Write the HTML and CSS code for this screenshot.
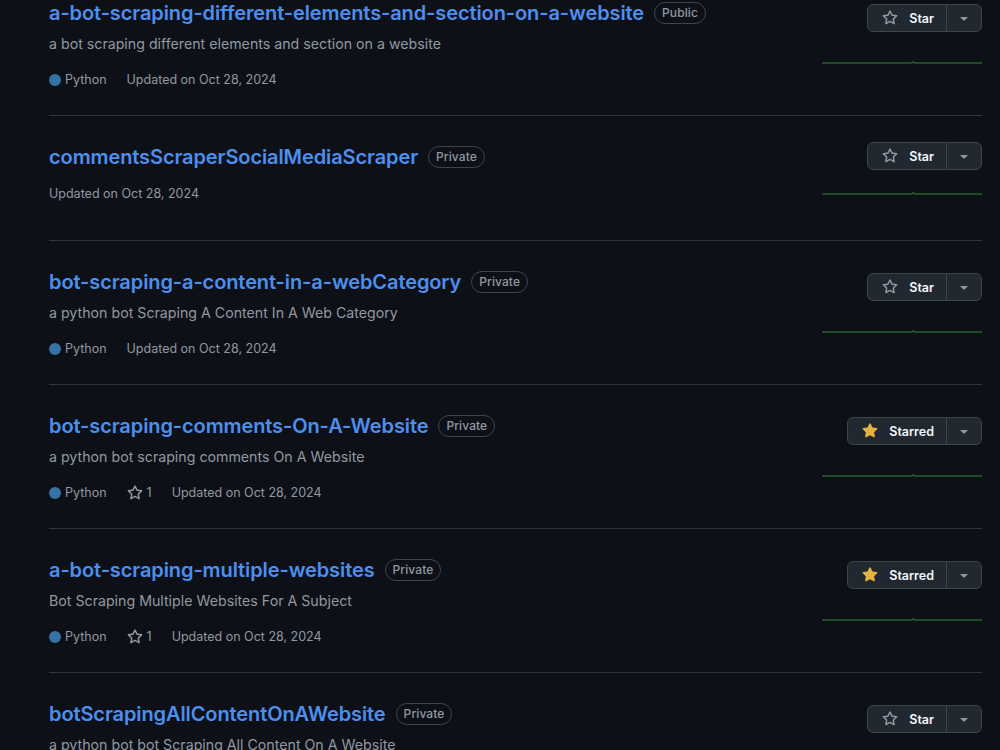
FILE: index.html
```html
<!DOCTYPE html>
<html lang="en">
<head>
<meta charset="utf-8">
<title>Repositories</title>
<link rel="stylesheet" href="styles.css">
</head>
<body>
<ul class="repo-list">
  <li class="repo">
    <div class="repo-main">
      <h3 class="repo-title"><a class="repo-link" href="#">a-bot-scraping-different-elements-and-section-on-a-website</a><span class="badge">Public</span></h3>
      <p class="repo-desc">a bot scraping different elements and section on a website</p>
      <div class="repo-meta"><span class="lang"><span class="lang-dot"></span>Python</span><span>Updated on Oct 28, 2024</span></div>
    </div>
    <div class="repo-side">
      <div class="star-group"><button class="star-btn"><svg class="star-icon" viewBox="0 0 16 16" width="16" height="16"><path d="M8 .25a.75.75 0 0 1 .673.418l1.882 3.815 4.21.612a.75.75 0 0 1 .416 1.279l-3.046 2.97.719 4.192a.751.751 0 0 1-1.088.791L8 12.347l-3.766 1.98a.75.75 0 0 1-1.088-.79l.72-4.194L.818 6.374a.75.75 0 0 1 .416-1.28l4.21-.611L7.327.668A.75.75 0 0 1 8 .25Zm0 2.445L6.615 5.5a.75.75 0 0 1-.564.41l-3.097.45 2.24 2.184a.75.75 0 0 1 .216.664l-.528 3.084 2.769-1.456a.75.75 0 0 1 .698 0l2.77 1.456-.53-3.084a.75.75 0 0 1 .216-.664l2.24-2.183-3.096-.45a.75.75 0 0 1-.564-.41L8 2.694Z"/></svg>Star</button><button class="star-drop"><svg viewBox="0 0 16 16" width="16" height="16"><path d="m4.427 7.427 3.396 3.396a.25.25 0 0 0 .354 0l3.396-3.396A.25.25 0 0 0 11.396 7H4.604a.25.25 0 0 0-.177.427Z"/></svg></button></div>
      <div class="spark"><svg viewBox="0 0 160 30" width="160" height="30"><polyline points="0,24 89,24 91,23 93,24 160,24"/></svg></div>
    </div>
  </li>
  <li class="repo">
    <div class="repo-main">
      <h3 class="repo-title"><a class="repo-link" href="#">commentsScraperSocialMediaScraper</a><span class="badge">Private</span></h3>
      <div class="repo-meta solo"><span>Updated on Oct 28, 2024</span></div>
    </div>
    <div class="repo-side">
      <div class="star-group"><button class="star-btn"><svg class="star-icon" viewBox="0 0 16 16" width="16" height="16"><path d="M8 .25a.75.75 0 0 1 .673.418l1.882 3.815 4.21.612a.75.75 0 0 1 .416 1.279l-3.046 2.97.719 4.192a.751.751 0 0 1-1.088.791L8 12.347l-3.766 1.98a.75.75 0 0 1-1.088-.79l.72-4.194L.818 6.374a.75.75 0 0 1 .416-1.28l4.21-.611L7.327.668A.75.75 0 0 1 8 .25Zm0 2.445L6.615 5.5a.75.75 0 0 1-.564.41l-3.097.45 2.24 2.184a.75.75 0 0 1 .216.664l-.528 3.084 2.769-1.456a.75.75 0 0 1 .698 0l2.77 1.456-.53-3.084a.75.75 0 0 1 .216-.664l2.24-2.183-3.096-.45a.75.75 0 0 1-.564-.41L8 2.694Z"/></svg>Star</button><button class="star-drop"><svg viewBox="0 0 16 16" width="16" height="16"><path d="m4.427 7.427 3.396 3.396a.25.25 0 0 0 .354 0l3.396-3.396A.25.25 0 0 0 11.396 7H4.604a.25.25 0 0 0-.177.427Z"/></svg></button></div>
      <div class="spark"><svg viewBox="0 0 160 30" width="160" height="30"><polyline points="0,24 89,24 91,23 93,24 160,24"/></svg></div>
    </div>
  </li>
  <li class="repo">
    <div class="repo-main">
      <h3 class="repo-title"><a class="repo-link" href="#">bot-scraping-a-content-in-a-webCategory</a><span class="badge">Private</span></h3>
      <p class="repo-desc">a python bot Scraping A Content In A Web Category</p>
      <div class="repo-meta"><span class="lang"><span class="lang-dot"></span>Python</span><span>Updated on Oct 28, 2024</span></div>
    </div>
    <div class="repo-side">
      <div class="star-group"><button class="star-btn"><svg class="star-icon" viewBox="0 0 16 16" width="16" height="16"><path d="M8 .25a.75.75 0 0 1 .673.418l1.882 3.815 4.21.612a.75.75 0 0 1 .416 1.279l-3.046 2.97.719 4.192a.751.751 0 0 1-1.088.791L8 12.347l-3.766 1.98a.75.75 0 0 1-1.088-.79l.72-4.194L.818 6.374a.75.75 0 0 1 .416-1.28l4.21-.611L7.327.668A.75.75 0 0 1 8 .25Zm0 2.445L6.615 5.5a.75.75 0 0 1-.564.41l-3.097.45 2.24 2.184a.75.75 0 0 1 .216.664l-.528 3.084 2.769-1.456a.75.75 0 0 1 .698 0l2.77 1.456-.53-3.084a.75.75 0 0 1 .216-.664l2.24-2.183-3.096-.45a.75.75 0 0 1-.564-.41L8 2.694Z"/></svg>Star</button><button class="star-drop"><svg viewBox="0 0 16 16" width="16" height="16"><path d="m4.427 7.427 3.396 3.396a.25.25 0 0 0 .354 0l3.396-3.396A.25.25 0 0 0 11.396 7H4.604a.25.25 0 0 0-.177.427Z"/></svg></button></div>
      <div class="spark"><svg viewBox="0 0 160 30" width="160" height="30"><polyline points="0,24 89,24 91,23 93,24 160,24"/></svg></div>
    </div>
  </li>
  <li class="repo">
    <div class="repo-main">
      <h3 class="repo-title"><a class="repo-link" href="#">bot-scraping-comments-On-A-Website</a><span class="badge">Private</span></h3>
      <p class="repo-desc">a python bot scraping comments On A Website</p>
      <div class="repo-meta"><span class="lang"><span class="lang-dot"></span>Python</span><span class="stars"><svg class="star-icon" viewBox="0 0 16 16" width="16" height="16"><path d="M8 .25a.75.75 0 0 1 .673.418l1.882 3.815 4.21.612a.75.75 0 0 1 .416 1.279l-3.046 2.97.719 4.192a.751.751 0 0 1-1.088.791L8 12.347l-3.766 1.98a.75.75 0 0 1-1.088-.79l.72-4.194L.818 6.374a.75.75 0 0 1 .416-1.28l4.21-.611L7.327.668A.75.75 0 0 1 8 .25Zm0 2.445L6.615 5.5a.75.75 0 0 1-.564.41l-3.097.45 2.24 2.184a.75.75 0 0 1 .216.664l-.528 3.084 2.769-1.456a.75.75 0 0 1 .698 0l2.77 1.456-.53-3.084a.75.75 0 0 1 .216-.664l2.24-2.183-3.096-.45a.75.75 0 0 1-.564-.41L8 2.694Z"/></svg>1</span><span>Updated on Oct 28, 2024</span></div>
    </div>
    <div class="repo-side">
      <div class="star-group"><button class="star-btn"><svg class="star-icon filled" viewBox="0 0 16 16" width="16" height="16"><path d="M8 .25a.75.75 0 0 1 .673.418l1.882 3.815 4.21.612a.75.75 0 0 1 .416 1.279l-3.046 2.97.719 4.192a.751.751 0 0 1-1.088.791L8 12.347l-3.766 1.98a.75.75 0 0 1-1.088-.79l.72-4.194L.818 6.374a.75.75 0 0 1 .416-1.28l4.21-.611L7.327.668A.75.75 0 0 1 8 .25Z"/></svg>Starred</button><button class="star-drop"><svg viewBox="0 0 16 16" width="16" height="16"><path d="m4.427 7.427 3.396 3.396a.25.25 0 0 0 .354 0l3.396-3.396A.25.25 0 0 0 11.396 7H4.604a.25.25 0 0 0-.177.427Z"/></svg></button></div>
      <div class="spark"><svg viewBox="0 0 160 30" width="160" height="30"><polyline points="0,24 89,24 91,23 93,24 160,24"/></svg></div>
    </div>
  </li>
  <li class="repo">
    <div class="repo-main">
      <h3 class="repo-title"><a class="repo-link" href="#">a-bot-scraping-multiple-websites</a><span class="badge">Private</span></h3>
      <p class="repo-desc">Bot Scraping Multiple Websites For A Subject</p>
      <div class="repo-meta"><span class="lang"><span class="lang-dot"></span>Python</span><span class="stars"><svg class="star-icon" viewBox="0 0 16 16" width="16" height="16"><path d="M8 .25a.75.75 0 0 1 .673.418l1.882 3.815 4.21.612a.75.75 0 0 1 .416 1.279l-3.046 2.97.719 4.192a.751.751 0 0 1-1.088.791L8 12.347l-3.766 1.98a.75.75 0 0 1-1.088-.79l.72-4.194L.818 6.374a.75.75 0 0 1 .416-1.28l4.21-.611L7.327.668A.75.75 0 0 1 8 .25Zm0 2.445L6.615 5.5a.75.75 0 0 1-.564.41l-3.097.45 2.24 2.184a.75.75 0 0 1 .216.664l-.528 3.084 2.769-1.456a.75.75 0 0 1 .698 0l2.77 1.456-.53-3.084a.75.75 0 0 1 .216-.664l2.24-2.183-3.096-.45a.75.75 0 0 1-.564-.41L8 2.694Z"/></svg>1</span><span>Updated on Oct 28, 2024</span></div>
    </div>
    <div class="repo-side">
      <div class="star-group"><button class="star-btn"><svg class="star-icon filled" viewBox="0 0 16 16" width="16" height="16"><path d="M8 .25a.75.75 0 0 1 .673.418l1.882 3.815 4.21.612a.75.75 0 0 1 .416 1.279l-3.046 2.97.719 4.192a.751.751 0 0 1-1.088.791L8 12.347l-3.766 1.98a.75.75 0 0 1-1.088-.79l.72-4.194L.818 6.374a.75.75 0 0 1 .416-1.28l4.21-.611L7.327.668A.75.75 0 0 1 8 .25Z"/></svg>Starred</button><button class="star-drop"><svg viewBox="0 0 16 16" width="16" height="16"><path d="m4.427 7.427 3.396 3.396a.25.25 0 0 0 .354 0l3.396-3.396A.25.25 0 0 0 11.396 7H4.604a.25.25 0 0 0-.177.427Z"/></svg></button></div>
      <div class="spark"><svg viewBox="0 0 160 30" width="160" height="30"><polyline points="0,24 89,24 91,23 93,24 160,24"/></svg></div>
    </div>
  </li>
  <li class="repo">
    <div class="repo-main">
      <h3 class="repo-title"><a class="repo-link" href="#">botScrapingAllContentOnAWebsite</a><span class="badge">Private</span></h3>
      <p class="repo-desc">a python bot bot Scraping All Content On A Website</p>
      <div class="repo-meta"><span class="lang"><span class="lang-dot"></span>Python</span><span>Updated on Oct 28, 2024</span></div>
    </div>
    <div class="repo-side">
      <div class="star-group"><button class="star-btn"><svg class="star-icon" viewBox="0 0 16 16" width="16" height="16"><path d="M8 .25a.75.75 0 0 1 .673.418l1.882 3.815 4.21.612a.75.75 0 0 1 .416 1.279l-3.046 2.97.719 4.192a.751.751 0 0 1-1.088.791L8 12.347l-3.766 1.98a.75.75 0 0 1-1.088-.79l.72-4.194L.818 6.374a.75.75 0 0 1 .416-1.28l4.21-.611L7.327.668A.75.75 0 0 1 8 .25Zm0 2.445L6.615 5.5a.75.75 0 0 1-.564.41l-3.097.45 2.24 2.184a.75.75 0 0 1 .216.664l-.528 3.084 2.769-1.456a.75.75 0 0 1 .698 0l2.77 1.456-.53-3.084a.75.75 0 0 1 .216-.664l2.24-2.183-3.096-.45a.75.75 0 0 1-.564-.41L8 2.694Z"/></svg>Star</button><button class="star-drop"><svg viewBox="0 0 16 16" width="16" height="16"><path d="m4.427 7.427 3.396 3.396a.25.25 0 0 0 .354 0l3.396-3.396A.25.25 0 0 0 11.396 7H4.604a.25.25 0 0 0-.177.427Z"/></svg></button></div>
      <div class="spark"><svg viewBox="0 0 160 30" width="160" height="30"><polyline points="0,24 89,24 91,23 93,24 160,24"/></svg></div>
    </div>
  </li>
</ul>
</body>
</html>
```

FILE: styles.css
```css
html, body {
  margin: 0;
  padding: 0;
  background: #0d1117;
  height: 100%;
  overflow: hidden;
}

body {
  font-family: Inter, "Noto Sans", "Liberation Sans", sans-serif;
  color: #f0f6fc;
}

.repo-list {
  list-style: none;
  margin: -28px 18px 0 49px;
  padding: 0;
}

.repo {
  display: flex;
  border-bottom: 1px solid #30363d;
  padding: 26px 0 25px;
}

.repo-main {
  flex: 1;
  min-width: 0;
}

.repo-title {
  margin: 0;
  font-size: 20px;
  line-height: 30px;
  font-weight: 600;
  display: flex;
  align-items: center;
  letter-spacing: -0.1px;
}

.repo-link {
  color: #4c8ff0;
  text-decoration: none;
}

.badge {
  margin-left: 10px;
  display: inline-flex;
  align-items: center;
  height: 20px;
  padding: 0 7px;
  border: 1px solid #3d444d;
  border-radius: 999px;
  font-size: 12px;
  font-weight: 500;
  color: #9198a1;
  letter-spacing: 0.1px;
}

.repo-desc {
  margin: 5px 0 0;
  font-size: 14.2px;
  line-height: 22px;
  color: #9198a1;
}

.repo-meta {
  margin-top: 15px;
  display: flex;
  align-items: center;
  gap: 20px;
  font-size: 12.5px;
  line-height: 20px;
  color: #9198a1;
}

.repo-meta.solo {
  margin-top: 12px;
}

.lang {
  display: inline-flex;
  align-items: center;
  gap: 4px;
}

.lang-dot {
  width: 12px;
  height: 12px;
  border-radius: 50%;
  background: #3572a5;
}

.stars {
  display: inline-flex;
  align-items: center;
  gap: 4px;
}

.star-icon {
  fill: #9198a1;
}

.star-icon.filled {
  fill: #e3b341;
}

.repo-side {
  display: flex;
  flex-direction: column;
  justify-content: space-evenly;
  align-items: flex-end;
  margin-left: 16px;
}

.star-group {
  display: flex;
  height: 28px;
  border: 1px solid #3d444d;
  border-radius: 6px;
  background: #212830;
  box-sizing: border-box;
  overflow: hidden;
}

.star-group button {
  font-family: inherit;
  background: transparent;
  border: 0;
  color: #f0f6fc;
  display: inline-flex;
  align-items: center;
  cursor: pointer;
  padding: 0;
}

.star-group .star-btn {
  gap: 11px;
  padding: 0 12px 0 14px;
  font-size: 12.5px;
  font-weight: 600;
  border-right: 1px solid #3d444d;
}

.star-group .star-drop {
  width: 34px;
  justify-content: center;
}

.star-drop svg {
  fill: #9198a1;
}

.spark {
  height: 45px;
}

.spark svg {
  display: block;
}

.spark polyline {
  fill: none;
  stroke: #2a5a30;
  stroke-width: 1.6;
}
```
